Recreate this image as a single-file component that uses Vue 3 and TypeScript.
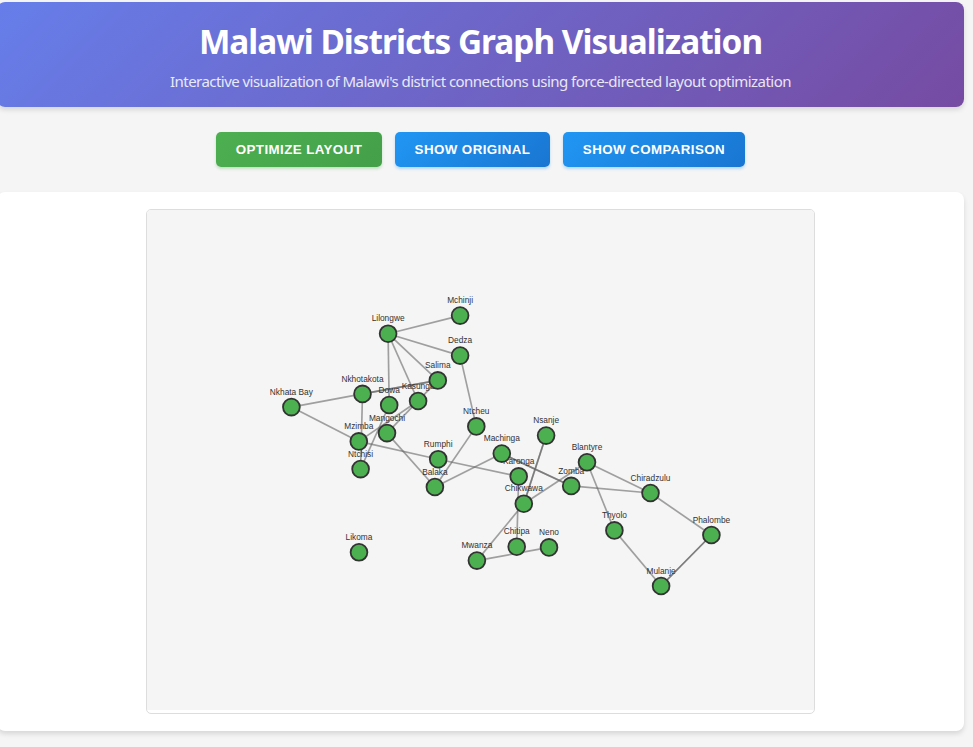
<script setup lang="ts">
interface District {
  name: string
  x: number
  y: number
}

const actions: { label: string; kind: string }[] = [
  { label: 'Optimize Layout', kind: 'primary' },
  { label: 'Show Original', kind: 'secondary' },
  { label: 'Show Comparison', kind: 'secondary' },
]

const districts: District[] = [
  { name: 'Blantyre', x: 440, y: 252.3 },
  { name: 'Chikwawa', x: 376.8, y: 293.7 },
  { name: 'Chiradzulu', x: 503.5, y: 283 },
  { name: 'Chitipa', x: 369.7, y: 336.7 },
  { name: 'Dedza', x: 313.1, y: 145.6 },
  { name: 'Dowa', x: 242.2, y: 195 },
  { name: 'Karonga', x: 371.7, y: 266.4 },
  { name: 'Kasungu', x: 271.1, y: 191 },
  { name: 'Likoma', x: 212, y: 342.3 },
  { name: 'Lilongwe', x: 241.1, y: 123.7 },
  { name: 'Machinga', x: 354.8, y: 243.6 },
  { name: 'Mangochi', x: 240, y: 223.1 },
  { name: 'Mchinji', x: 313.1, y: 105.6 },
  { name: 'Mulanje', x: 514.1, y: 376 },
  { name: 'Mwanza', x: 329.9, y: 350.6 },
  { name: 'Mzimba', x: 211.8, y: 231.4 },
  { name: 'Neno', x: 402, y: 337.4 },
  { name: 'Nkhata Bay', x: 144.4, y: 197.1 },
  { name: 'Nkhotakota', x: 215.5, y: 183.9 },
  { name: 'Nsanje', x: 399.1, y: 225.6 },
  { name: 'Ntcheu', x: 329.3, y: 216.4 },
  { name: 'Ntchisi', x: 213.6, y: 259.1 },
  { name: 'Phalombe', x: 564.4, y: 325 },
  { name: 'Rumphi', x: 291.2, y: 249.2 },
  { name: 'Salima', x: 290.8, y: 170.4 },
  { name: 'Thyolo', x: 467.4, y: 320.4 },
  { name: 'Zomba', x: 424.2, y: 275.9 },
  { name: 'Balaka', x: 287.9, y: 277 },
]

const connections: [string, string][] = [
  ['Lilongwe', 'Mchinji'], ['Lilongwe', 'Dedza'], ['Lilongwe', 'Salima'],
  ['Lilongwe', 'Kasungu'], ['Lilongwe', 'Dowa'], ['Dedza', 'Ntcheu'],
  ['Ntcheu', 'Balaka'], ['Nkhata Bay', 'Nkhotakota'], ['Nkhata Bay', 'Mzimba'],
  ['Nkhotakota', 'Salima'], ['Salima', 'Nkhotakota'], ['Nkhotakota', 'Ntchisi'],
  ['Dowa', 'Ntchisi'], ['Kasungu', 'Mzimba'], ['Salima', 'Mangochi'],
  ['Mzimba', 'Rumphi'], ['Rumphi', 'Karonga'], ['Karonga', 'Chitipa'],
  ['Mangochi', 'Balaka'], ['Balaka', 'Machinga'], ['Machinga', 'Zomba'],
  ['Zomba', 'Machinga'], ['Zomba', 'Chiradzulu'], ['Blantyre', 'Chiradzulu'],
  ['Blantyre', 'Thyolo'], ['Blantyre', 'Chikwawa'], ['Chikwawa', 'Nsanje'],
  ['Nsanje', 'Chikwawa'], ['Chikwawa', 'Mwanza'], ['Mwanza', 'Neno'],
  ['Thyolo', 'Mulanje'], ['Mulanje', 'Phalombe'], ['Phalombe', 'Mulanje'],
  ['Chiradzulu', 'Phalombe'],
]

const byName = new Map(districts.map((d) => [d.name, d]))
const edges = connections.map(([a, b]) => ({ from: byName.get(a)!, to: byName.get(b)! }))
</script>

<template>
  <main class="page">
    <header class="banner">
      <h1>Malawi Districts Graph Visualization</h1>
      <p>Interactive visualization of Malawi's district connections using force-directed layout optimization</p>
    </header>
    <div class="controls">
      <button v-for="a in actions" :key="a.label" type="button" :class="['btn', a.kind]">{{ a.label }}</button>
    </div>
    <section class="panel">
      <div class="frame">
        <svg class="graph" viewBox="0 0 667 500" width="667" height="500">
          <line
            v-for="(e, i) in edges"
            :key="i"
            class="edge"
            :x1="e.from.x"
            :y1="e.from.y"
            :x2="e.to.x"
            :y2="e.to.y"
          />
          <g v-for="d in districts" :key="d.name">
            <circle class="node" :cx="d.x" :cy="d.y" r="8.4" />
            <text class="label" :x="d.x" :y="d.y - 12.3">{{ d.name }}</text>
          </g>
        </svg>
      </div>
    </section>
  </main>
</template>

<style>
body {
  background: #f5f5f5;
  overflow: hidden;
}
</style>

<style scoped>
.page {
  box-sizing: border-box;
  width: 967px;
  height: 747px;
  margin-left: -3px;
  padding-top: 2px;
  font-family: 'Noto Sans', 'Open Sans', sans-serif;
}
.banner {
  box-sizing: border-box;
  height: 105px;
  padding-top: 17px;
  border-radius: 8px;
  color: #fff;
  text-align: center;
  background: linear-gradient(135deg, #667eea 0%, #764ba2 100%);
  box-shadow: 0 3px 5px rgba(0, 0, 0, 0.12);
}
h1 {
  margin: 0;
  font-size: 33.33px;
  line-height: 44px;
  font-weight: 700;
  letter-spacing: -0.99px;
  white-space: nowrap;
}
p {
  margin: 8px 0 0;
  font-size: 15px;
  line-height: 20px;
  letter-spacing: -0.545px;
  opacity: 0.85;
  white-space: nowrap;
}
.controls {
  display: flex;
  justify-content: center;
  gap: 13px;
  padding: 25px 0;
}
.btn {
  box-sizing: border-box;
  height: 35px;
  padding: 0;
  border: 0;
  border-radius: 5px;
  color: #fff;
  font-family: 'Liberation Sans', Arial, sans-serif;
  font-size: 13.33px;
  font-weight: 700;
  letter-spacing: 0.42px;
  text-transform: uppercase;
  white-space: nowrap;
}
.primary {
  width: 166px;
  background: linear-gradient(135deg, #4caf50, #45a049);
  box-shadow: 0 2px 3px rgba(76, 175, 80, 0.3);
}
.secondary {
  width: 155px;
  background: linear-gradient(135deg, #2196f3, #1976d2);
  box-shadow: 0 2px 3px rgba(33, 150, 243, 0.3);
}
.secondary:last-child {
  width: 182px;
}
.panel {
  box-sizing: border-box;
  display: flex;
  justify-content: center;
  height: 539px;
  padding-top: 17px;
  border-radius: 8px;
  background: #fff;
  box-shadow: 0 3px 5px rgba(0, 0, 0, 0.12);
}
.frame {
  box-sizing: border-box;
  width: 669px;
  height: 505px;
  border: 1px solid #ddd;
  border-radius: 5px;
  overflow: hidden;
}
.graph {
  display: block;
  background: #f5f5f5;
}
.edge {
  stroke: #666;
  stroke-width: 1.67;
  stroke-opacity: 0.6;
}
.node {
  fill: #4caf50;
  stroke: #333;
  stroke-width: 1.8;
}
.label {
  fill: #333;
  font-family: 'Liberation Sans', Arial, sans-serif;
  font-size: 8.33px;
  text-anchor: middle;
}
</style>
